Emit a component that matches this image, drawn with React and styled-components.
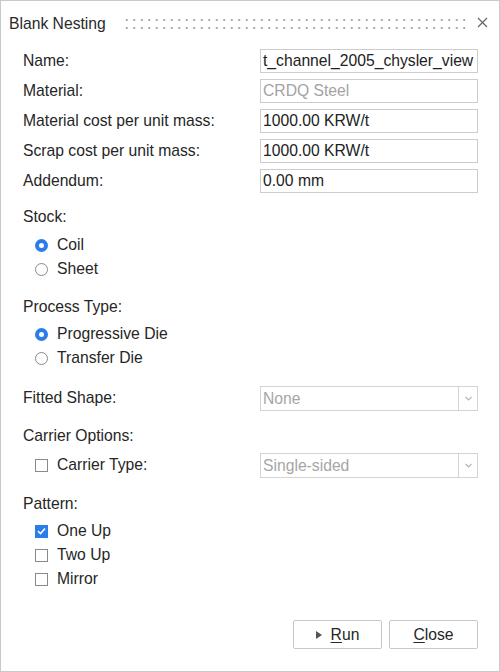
import React from "react";
import styled, { createGlobalStyle } from "styled-components";

const GlobalStyle = createGlobalStyle`
  html, body {
    margin: 0;
    padding: 0;
    background: #fff;
  }
  body {
    font-family: "Liberation Sans", Arial, sans-serif;
    font-size: 15.7px;
    color: #222;
  }
`;

const Window = styled.div`
  width: 500px;
  height: 672px;
  box-sizing: border-box;
  border: 1px solid #c9c9c9;
  background: #fff;
  display: flex;
  flex-direction: column;
`;

const TitleBar = styled.div`
  height: 48px;
  display: flex;
  align-items: center;
  padding: 0 11px 0 8px;
  box-sizing: border-box;
`;

const Title = styled.span`
  font-size: 15.7px;
  color: #2a2a2a;
  margin-top: -3px;
`;

const Grip = styled.div`
  flex: 1;
  height: 10px;
  margin: -3px 11px 0 17px;
  background-image: radial-gradient(circle, #a8a8a8 1px, transparent 1.2px);
  background-size: 7.5px 8px;
  background-position: 0 -3px;
`;

const CloseIcon = styled.svg`
  width: 11px;
  height: 11px;
  margin-top: -5px;
  stroke: #666;
  stroke-width: 1.2;
`;

const Body = styled.div`
  flex: 1;
  padding: 0 21px 0 22px;
  display: flex;
  flex-direction: column;
`;

const FieldGrid = styled.div`
  display: grid;
  grid-template-columns: 237px 218px;
  grid-auto-rows: 24px;
  row-gap: 6px;
  align-items: center;
  margin-top: ${(p) => p.$mt || 0}px;
`;

const Label = styled.span`
  font-size: 15.7px;
  color: #262626;
  white-space: nowrap;
  display: flex;
  align-items: center;
  gap: 9px;
  padding-left: ${(p) => p.$indent || 0}px;
`;

const TextBox = styled.div`
  height: 24px;
  box-sizing: border-box;
  border: 1px solid #cdcdcd;
  padding: 0 2px;
  line-height: 22px;
  font-size: 15.7px;
  color: ${(p) => (p.$disabled ? "#a3a3a3" : "#222")};
  white-space: nowrap;
  overflow: hidden;
`;

const SelectBox = styled.div`
  height: 25px;
  box-sizing: border-box;
  border: 1px solid #d4d4d4;
  display: flex;
  font-size: 15.7px;
  color: #a6a6a6;
`;

const SelectValue = styled.div`
  flex: 1;
  padding: 0 2px;
  line-height: 23px;
`;

const SelectArrow = styled.div`
  width: 18px;
  border-left: 1px solid #d4d4d4;
  display: flex;
  align-items: center;
  justify-content: center;
`;

const SectionLabel = styled.div`
  height: 20px;
  line-height: 20px;
  font-size: 15.7px;
  color: #262626;
  margin-top: ${(p) => p.$mt || 0}px;
`;

const OptionList = styled.div`
  display: flex;
  flex-direction: column;
  padding-left: 12px;
  margin-top: ${(p) => p.$mt || 0}px;
`;

const Option = styled.div`
  height: 24px;
  display: flex;
  align-items: center;
  gap: 9px;
  font-size: 15.7px;
  color: #262626;
`;

const Radio = styled.span`
  width: 13px;
  height: 13px;
  box-sizing: border-box;
  border-radius: 50%;
  border: ${(p) => (p.$checked ? "4px solid #2b7de9" : "1px solid #8a8a8a")};
  background: #fff;
  flex-shrink: 0;
`;

const Check = styled.span`
  width: 13px;
  height: 13px;
  box-sizing: border-box;
  border: ${(p) => (p.$checked ? "none" : "1px solid #8a8a8a")};
  background: ${(p) => (p.$checked ? "#2b7de9" : "#fff")};
  display: flex;
  align-items: center;
  justify-content: center;
  flex-shrink: 0;
`;

const ButtonRow = styled.div`
  display: flex;
  justify-content: flex-end;
  gap: 7px;
  margin-top: 29px;
`;

const Button = styled.button`
  width: 89px;
  height: 29px;
  box-sizing: border-box;
  border: 1px solid #c8c8c8;
  border-radius: 2px;
  background: #fff;
  font-family: "Liberation Sans", Arial, sans-serif;
  font-size: 15.7px;
  color: #262626;
  display: flex;
  align-items: center;
  justify-content: center;
  gap: 9px;
  padding: 0;
  u {
    text-decoration-thickness: 1px;
    text-underline-offset: 2px;
  }
`;

const Triangle = styled.span`
  width: 0;
  height: 0;
  border-top: 4px solid transparent;
  border-bottom: 4px solid transparent;
  border-left: 6px solid #555;
`;

function CheckMark() {
  return (
    <svg width="9" height="8" viewBox="0 0 9 8">
      <path d="M1 4.2 L3.5 6.5 L8 1.5" fill="none" stroke="#fff" strokeWidth="1.6" />
    </svg>
  );
}

function Chevron() {
  return (
    <svg width="7" height="5" viewBox="0 0 7 5">
      <path d="M0.5 1 L3.5 4 L6.5 1" fill="none" stroke="#b5b5b5" strokeWidth="1.2" />
    </svg>
  );
}

function Select({ value }) {
  return (
    <SelectBox>
      <SelectValue>{value}</SelectValue>
      <SelectArrow>
        <Chevron />
      </SelectArrow>
    </SelectBox>
  );
}

const fields = [
  { label: "Name:", value: "t_channel_2005_chysler_view" },
  { label: "Material:", value: "CRDQ Steel", disabled: true },
  { label: "Material cost per unit mass:", value: "1000.00 KRW/t" },
  { label: "Scrap cost per unit mass:", value: "1000.00 KRW/t" },
  { label: "Addendum:", value: "0.00 mm" },
];

export default function App() {
  return (
    <>
      <GlobalStyle />
      <Window>
        <TitleBar>
          <Title>Blank Nesting</Title>
          <Grip />
          <CloseIcon viewBox="0 0 11 11">
            <path d="M1 1 L10 10 M10 1 L1 10" />
          </CloseIcon>
        </TitleBar>
        <Body>
          <FieldGrid>
            {fields.map((f) => (
              <React.Fragment key={f.label}>
                <Label>{f.label}</Label>
                <TextBox $disabled={f.disabled}>{f.value}</TextBox>
              </React.Fragment>
            ))}
          </FieldGrid>

          <SectionLabel $mt={14}>Stock:</SectionLabel>
          <OptionList $mt={6}>
            <Option>
              <Radio $checked />
              Coil
            </Option>
            <Option>
              <Radio />
              Sheet
            </Option>
          </OptionList>

          <SectionLabel $mt={16}>Process Type:</SectionLabel>
          <OptionList $mt={5}>
            <Option>
              <Radio $checked />
              Progressive Die
            </Option>
            <Option>
              <Radio />
              Transfer Die
            </Option>
          </OptionList>

          <FieldGrid $mt={16}>
            <Label>Fitted Shape:</Label>
            <Select value="None" />
          </FieldGrid>

          <SectionLabel $mt={16}>Carrier Options:</SectionLabel>
          <FieldGrid $mt={7}>
            <Label $indent={12}>
              <Check />
              Carrier Type:
            </Label>
            <Select value="Single-sided" />
          </FieldGrid>

          <SectionLabel $mt={17}>Pattern:</SectionLabel>
          <OptionList $mt={5}>
            <Option>
              <Check $checked>
                <CheckMark />
              </Check>
              One Up
            </Option>
            <Option>
              <Check />
              Two Up
            </Option>
            <Option>
              <Check />
              Mirror
            </Option>
          </OptionList>

          <ButtonRow>
            <Button>
              <Triangle />
              <span>
                <u>R</u>un
              </span>
            </Button>
            <Button>
              <span>
                <u>C</u>lose
              </span>
            </Button>
          </ButtonRow>
        </Body>
      </Window>
    </>
  );
}
